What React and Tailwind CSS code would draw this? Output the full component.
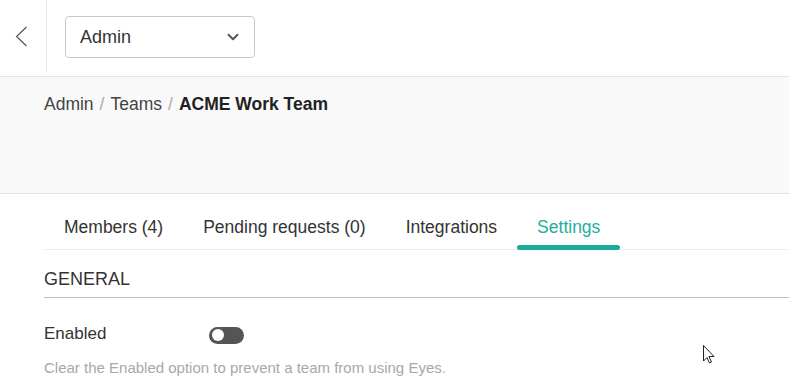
import { ChevronDown } from 'lucide-react';

const tabs = [
  { label: 'Members (4)' },
  { label: 'Pending requests (0)' },
  { label: 'Integrations' },
  { label: 'Settings', active: true },
];

const App = () => {
  return (
    <div className="relative w-[789px] h-[384px] overflow-hidden bg-white font-['Liberation_Sans',Arial,sans-serif] text-[#333]">
      {/* top bar */}
      <div className="h-[77px] flex border-b border-[#e3e3e3]">
        <div className="w-[47px] h-[72px] flex items-center justify-center border-r border-[#e6e6e6]">
          <svg width="13" height="21" viewBox="0 0 13 21" className="-ml-[4px]">
            <polyline points="11.5,1 1.5,10.5 11.5,20" fill="none" stroke="#555" strokeWidth="1.2" />
          </svg>
        </div>
        <div className="pl-[18px] pt-[16px]">
          <button className="w-[190px] h-[42px] flex items-center justify-between pl-[14px] pr-[12px] border border-[#c8c8c8] rounded-[4px] bg-white">
            <span className="text-[18px] text-[#333]">Admin</span>
            <ChevronDown size={18} strokeWidth={2.5} className="text-[#555]" />
          </button>
        </div>
      </div>

      {/* breadcrumb band */}
      <div className="h-[117px] bg-[#f9f9f9] border-b border-[#e3e3e3] px-[44px] pt-[16px]">
        <div className="flex items-center text-[17.5px] leading-[22px]">
          <span className="text-[#444]">Admin</span>
          <span className="mx-[6px] text-[#aaa]">/</span>
          <span className="text-[#444]">Teams</span>
          <span className="mx-[6px] text-[#aaa]">/</span>
          <span className="font-bold text-[#222]">ACME Work Team</span>
        </div>
      </div>

      {/* tabs */}
      <div className="ml-[44px] mt-[19px] flex border-b border-[#eee] h-[37px]">
        {tabs.map((t) => (
          <div
            key={t.label}
            className={`relative px-[20px] text-[17.5px] leading-[29px] ${t.active ? 'text-[#1fae9e]' : 'text-[#333]'}`}
          >
            {t.label}
            {t.active && (
              <div className="absolute left-0 right-0 -bottom-[1px] h-[5px] rounded-full bg-[#1aab9b]" />
            )}
          </div>
        ))}
      </div>

      {/* general */}
      <div className="ml-[44px] pt-[18px]">
        <div className="text-[18px] leading-[22px] text-[#333] pb-[7px] border-b border-[#bdbdbd]">GENERAL</div>
        <div className="flex items-center mt-[25px] h-[22px]">
          <span className="w-[165px] text-[17px] leading-[22px] text-[#333]">Enabled</span>
          <div className="w-[35px] h-[17px] mt-[2px] rounded-full bg-[#555] flex items-center pl-[3px]">
            <div className="w-[12px] h-[12px] rounded-full bg-white" />
          </div>
        </div>
        <p className="mt-[13px] text-[15px] leading-[20px] text-[#a8a8a8]">
          Clear the Enabled option to prevent a team from using Eyes.
        </p>
      </div>

      {/* mouse cursor */}
      <svg className="absolute left-[703px] top-[345px]" width="13" height="19" viewBox="0 0 13 19">
        <path d="M0.5 0.5 L0.5 16 L4 12.5 L6.5 18 L8.5 17 L6 11.5 L11 11.5 Z" fill="white" stroke="#222" strokeWidth="1" />
      </svg>
    </div>
  );
};

export default App;
